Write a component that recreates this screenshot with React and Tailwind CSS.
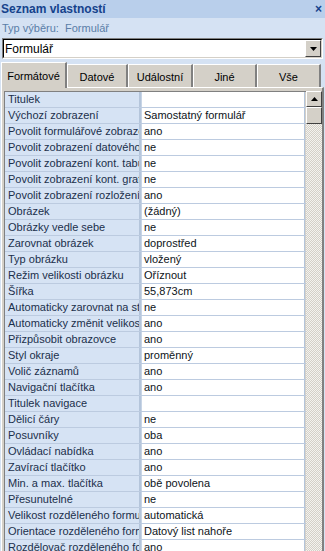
import React from "react";

const rows = [
  ["Titulek", ""],
  ["Výchozí zobrazení", "Samostatný formulář"],
  ["Povolit formulářové zobrazení", "ano"],
  ["Povolit zobrazení datového listu", "ne"],
  ["Povolit zobrazení kont. tabulky", "ne"],
  ["Povolit zobrazení kont. grafu", "ne"],
  ["Povolit zobrazení rozložení", "ano"],
  ["Obrázek", "(žádný)"],
  ["Obrázky vedle sebe", "ne"],
  ["Zarovnat obrázek", "doprostřed"],
  ["Typ obrázku", "vložený"],
  ["Režim velikosti obrázku", "Oříznout"],
  ["Šířka", "55,873cm"],
  ["Automaticky zarovnat na střed", "ne"],
  ["Automaticky změnit velikost", "ano"],
  ["Přizpůsobit obrazovce", "ano"],
  ["Styl okraje", "proměnný"],
  ["Volič záznamů", "ano"],
  ["Navigační tlačítka", "ano"],
  ["Titulek navigace", ""],
  ["Dělicí čáry", "ne"],
  ["Posuvníky", "oba"],
  ["Ovládací nabídka", "ano"],
  ["Zavírací tlačítko", "ano"],
  ["Min. a max. tlačítka", "obě povolena"],
  ["Přesunutelné", "ne"],
  ["Velikost rozděleného formuláře", "automatická"],
  ["Orientace rozděleného formuláře", "Datový list nahoře"],
  ["Rozdělovač rozděleného formuláře", "ano"],
];

const tabs = [
  { label: "Datové", w: "w-[61px]" },
  { label: "Událostní", w: "w-[65px]" },
  { label: "Jiné", w: "w-[64px]" },
  { label: "Vše", w: "w-[64px]" },
];

const App = () => {
  return (
    <div className="w-[325px] h-[551px] overflow-hidden bg-[#d5e2f3] font-['Liberation_Sans',Arial,sans-serif] text-[11px]">
      {/* title */}
      <div className="h-[18px] bg-[#b9cfeb] flex items-center justify-between pl-[1px] pr-[3px]">
        <span className="text-[12px] font-bold text-[#15428b] leading-none">
          Seznam vlastností
        </span>
        <span className="text-[12px] font-bold text-[#15428b] leading-none">×</span>
      </div>
      <div className="h-[16px] pl-[2px] flex items-center text-[#5a7ea8] mt-[2px]">
        Typ výběru:&nbsp; Formulář
      </div>

      {/* combobox */}
      <div className="mt-[2px] mx-[2px] h-[21px] border border-t-[#808080] border-l-[#808080] border-r-white border-b-white">
        <div className="h-full border border-t-black border-l-black border-r-[#d4d0c8] border-b-[#d4d0c8] bg-white flex items-center justify-between">
          <span className="pl-[1px] text-[12px] text-black leading-none">Formulář</span>
          <div className="w-[16px] h-[17px] bg-[#d4d0c8] border border-t-white border-l-white border-r-[#404040] border-b-[#404040] flex items-center justify-center">
            <svg width="7" height="4" viewBox="0 0 7 4">
              <path d="M0 0h7L3.5 4z" fill="#000" />
            </svg>
          </div>
        </div>
      </div>

      {/* tabs */}
      <div className="mt-[2px] flex items-end pl-[1px] h-[26px]">
        <div className="w-[66px] h-[26px] bg-[#d4d0c8] border-l border-t border-white border-r-2 border-r-[#808080] flex items-start justify-center pt-[5px] text-black relative z-10 -mb-[1px]">
          Formátové
        </div>
        {tabs.map((t) => (
          <div
            key={t.label}
            className={`${t.w} h-[23px] bg-[#d4d0c8] border-l border-t border-white border-r-2 border-r-[#808080] flex items-center justify-center pt-[2px] text-black`}
          >
            {t.label}
          </div>
        ))}
      </div>

      {/* panel */}
      <div className="bg-[#d4d0c8] border-t border-l border-white border-r-2 border-r-[#808080] ml-[1px] mr-[1px] h-[470px] pt-[3px] pl-[2px] flex">
        <div className="w-[302px] border-t border-l border-[#808080]">
          {rows.map(([label, value], i) => (
            <div key={i} className="flex h-[16px] border-b border-[#bccbe0]">
              <div className="w-[136px] bg-[#d6e3f4] border-r-2 border-[#b4c5db] pl-[3px] leading-[15px] text-[#1b2f4b] whitespace-nowrap overflow-hidden">
                {label}
              </div>
              <div className="w-[164px] bg-white border-l border-[#c8d5e6] border-r border-r-[#b4c5db] pl-[2px] leading-[15px] text-[#0d1320] whitespace-nowrap overflow-hidden">
                {value}
              </div>
            </div>
          ))}
        </div>
        <div className="w-[16px] flex flex-col">
          <div className="h-[16px] bg-[#d4d0c8] border border-t-white border-l-white border-r-[#404040] border-b-[#404040] flex items-center justify-center">
            <svg width="7" height="4" viewBox="0 0 7 4">
              <path d="M3.5 0L7 4H0z" fill="#000" />
            </svg>
          </div>
          <div className="h-[17px] bg-[#d4d0c8] border border-t-white border-l-white border-r-[#404040] border-b-[#404040]" />
          <div className="flex-1 bg-[repeating-conic-gradient(#d4d0c8_0_25%,#f4f3ef_0_50%)] bg-[length:2px_2px]" />
        </div>
      </div>
    </div>
  );
};

export default App;
